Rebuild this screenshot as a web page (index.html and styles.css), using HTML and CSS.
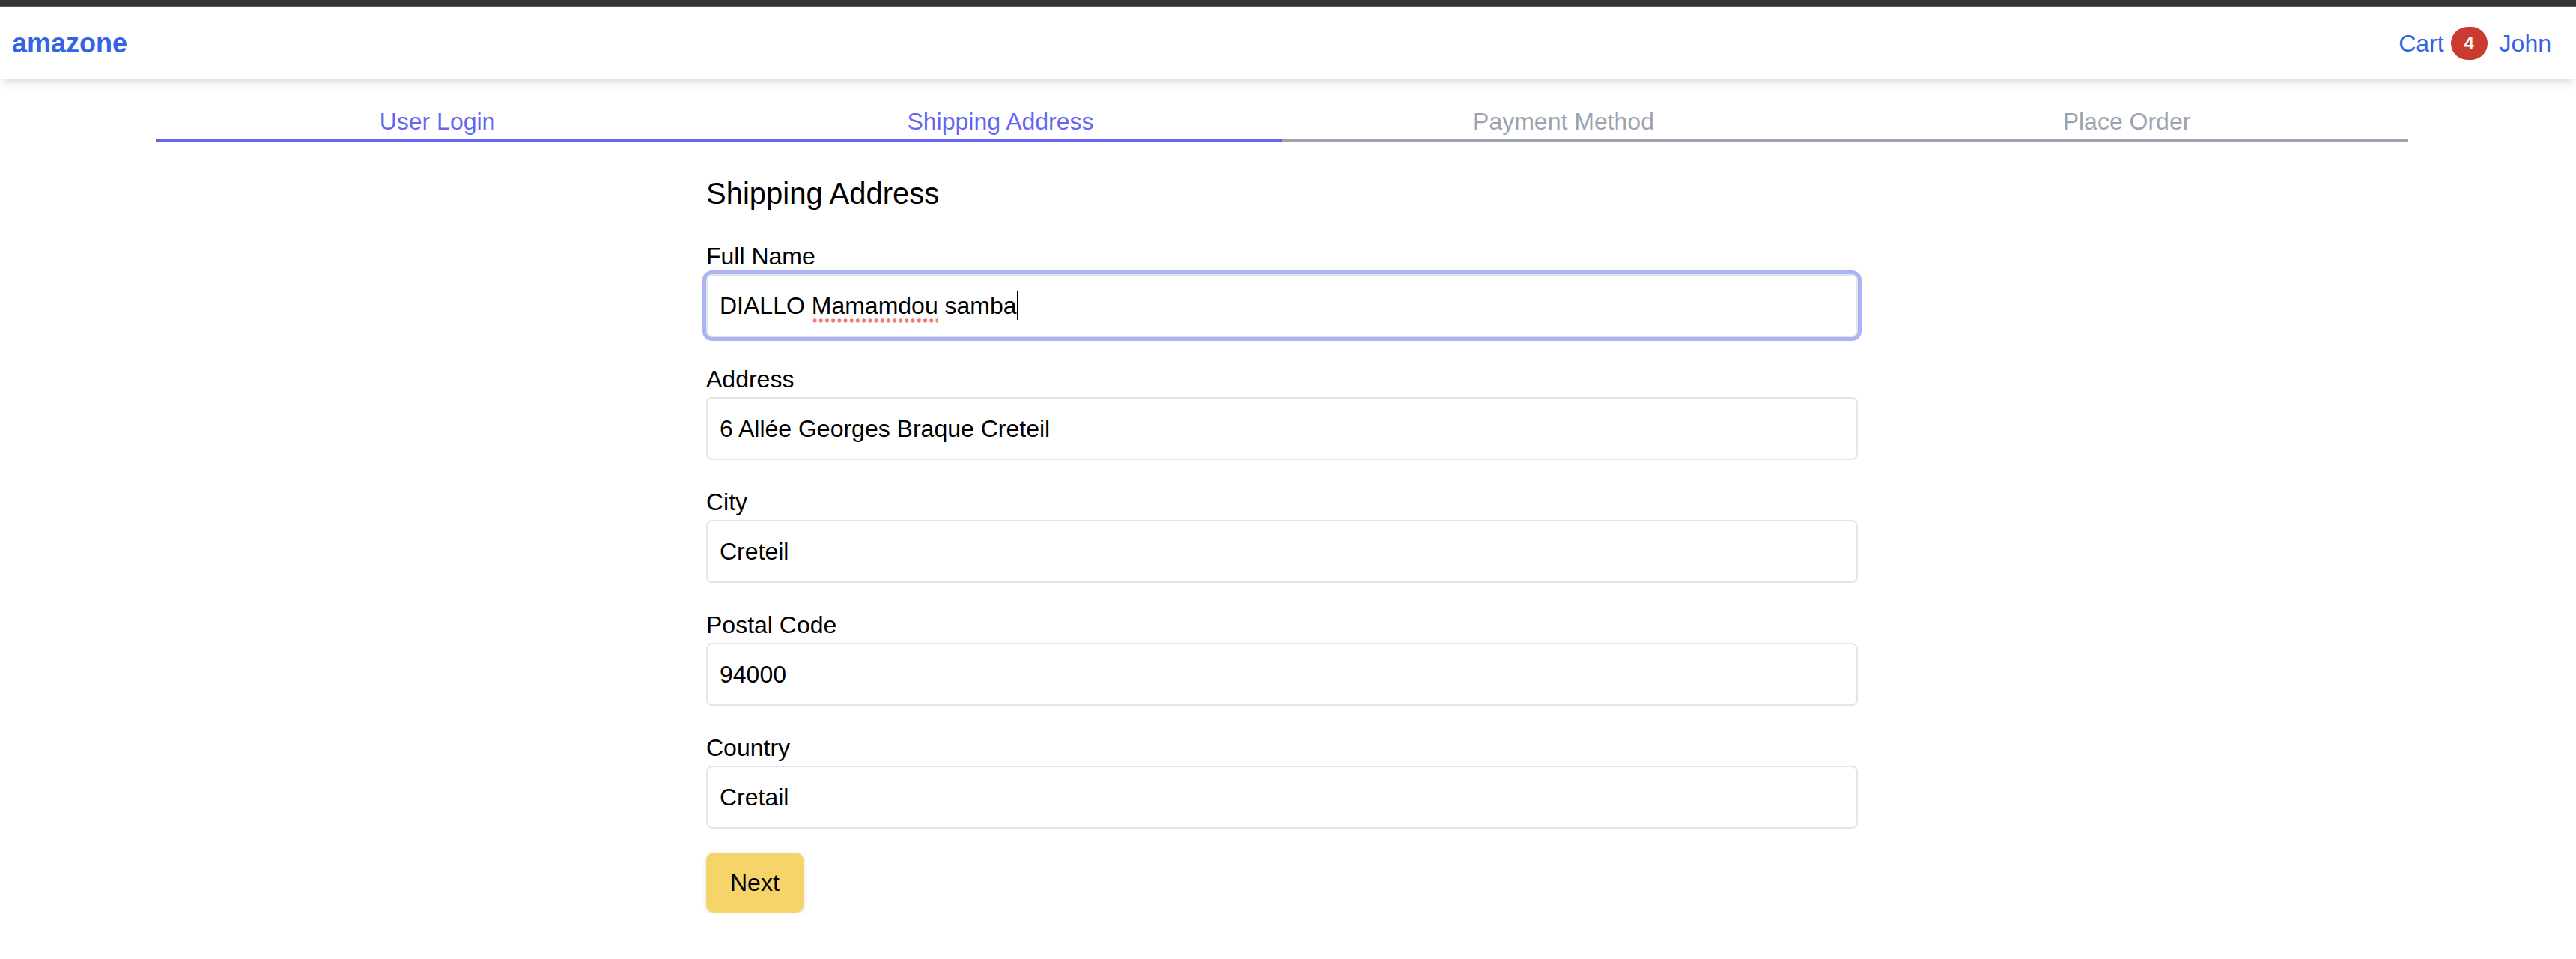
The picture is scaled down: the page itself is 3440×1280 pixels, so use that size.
FILE: index.html
```html
<!DOCTYPE html>
<html lang="en">
<head>
<meta charset="utf-8">
<title>amazone - Shipping Address</title>
<link rel="stylesheet" href="styles.css">
</head>
<body>
<div class="topbar"></div>
<header class="header">
  <a class="brand" href="#">amazone</a>
  <nav class="nav">
    <a class="nav-link" href="#">Cart</a>
    <span class="badge">4</span>
    <a class="nav-link user" href="#">John</a>
  </nav>
</header>
<main class="main">
  <ol class="steps">
    <li class="step active">User Login</li>
    <li class="step active">Shipping Address</li>
    <li class="step">Payment Method</li>
    <li class="step">Place Order</li>
  </ol>
  <form class="form">
    <h1 class="title">Shipping Address</h1>
    <div class="field">
      <label class="label">Full Name</label>
      <div class="input focused" role="textbox">DIALLO <span class="misspelled">Mamamdou</span> samba<span class="caret"></span></div>
    </div>
    <div class="field">
      <label class="label" for="address">Address</label>
      <input class="input" id="address" value="6 Allée Georges Braque Creteil">
    </div>
    <div class="field">
      <label class="label" for="city">City</label>
      <input class="input" id="city" value="Creteil">
    </div>
    <div class="field">
      <label class="label" for="postal">Postal Code</label>
      <input class="input" id="postal" value="94000">
    </div>
    <div class="field">
      <label class="label" for="country">Country</label>
      <input class="input" id="country" value="Cretail">
    </div>
    <div class="actions">
      <button class="btn" type="button">Next</button>
    </div>
  </form>
</main>
</body>
</html>
```
FILE: styles.css
```css
* { box-sizing: border-box; }

html, body {
  margin: 0;
  padding: 0;
  background: #ffffff;
  color: #000000;
  font-family: "Liberation Sans", Arial, sans-serif;
}

.topbar {
  height: 10px;
  background: #343538;
  border-bottom: 2px solid #5b5c5f;
}

.header {
  height: 96px;
  display: flex;
  align-items: center;
  justify-content: space-between;
  padding: 0 33px 0 16px;
  background: #ffffff;
  box-shadow: 0 8px 12px -2px rgba(0, 0, 0, 0.09), 0 4px 8px -4px rgba(0, 0, 0, 0.08);
  position: relative;
  z-index: 1;
}

.brand {
  font-size: 36px;
  font-weight: 700;
  color: #3563e4;
  text-decoration: none;
  line-height: 48px;
}

.nav {
  display: flex;
  align-items: center;
}

.nav-link {
  font-size: 32px;
  line-height: 48px;
  color: #3563e4;
  text-decoration: none;
}

.badge {
  margin-left: 9px;
  margin-right: 16px;
  width: 49px;
  height: 44px;
  border-radius: 22px;
  background: #c93a31;
  color: #ffffff;
  font-size: 24px;
  font-weight: 700;
  display: flex;
  align-items: center;
  justify-content: center;
}

.main {
  width: 3424px;
}

.steps {
  list-style: none;
  margin: 32px 208px 0;
  padding: 0;
  display: grid;
  grid-template-columns: repeat(4, 1fr);
}

.step {
  text-align: center;
  font-size: 32px;
  line-height: 48px;
  color: #9ca3af;
  border-bottom: 4px solid #9ca3af;
}

.step.active {
  color: #6366f1;
  border-bottom-color: #6366f1;
}

.form {
  width: 1538px;
  margin: 40px auto 0;
  display: flex;
  flex-direction: column;
  gap: 32px;
}

.title {
  margin: 0;
  font-size: 40px;
  line-height: 56px;
  font-weight: 400;
}

.field {
  display: flex;
  flex-direction: column;
}

.label {
  font-size: 32px;
  line-height: 48px;
}

.input {
  display: block;
  width: 100%;
  height: 84px;
  padding: 16px;
  border: 2px solid #e4e4e9;
  border-radius: 8px;
  font-family: "Liberation Sans", Arial, sans-serif;
  font-size: 32px;
  line-height: 48px;
  color: #000000;
  background: #ffffff;
  outline: none;
}

.input.focused {
  box-shadow: 0 0 0 5px #aab4f3;
  white-space: pre;
}

.misspelled {
  background-image: radial-gradient(circle, #ef7d72 2.4px, transparent 2.9px);
  background-size: 8.2px 6px;
  background-repeat: repeat-x;
  background-position: 0 100%;
  padding-bottom: 5px;
}

.caret {
  display: inline-block;
  width: 2px;
  height: 38px;
  background: #000000;
  vertical-align: -8px;
}

.actions {
  display: flex;
}

.btn {
  height: 80px;
  padding: 0 32px;
  border: none;
  border-radius: 10px;
  background: #f5d469;
  color: #000000;
  font-family: "Liberation Sans", Arial, sans-serif;
  font-size: 32px;
  line-height: 48px;
  box-shadow: 0 2px 6px rgba(0, 0, 0, 0.12);
  cursor: pointer;
}
```
